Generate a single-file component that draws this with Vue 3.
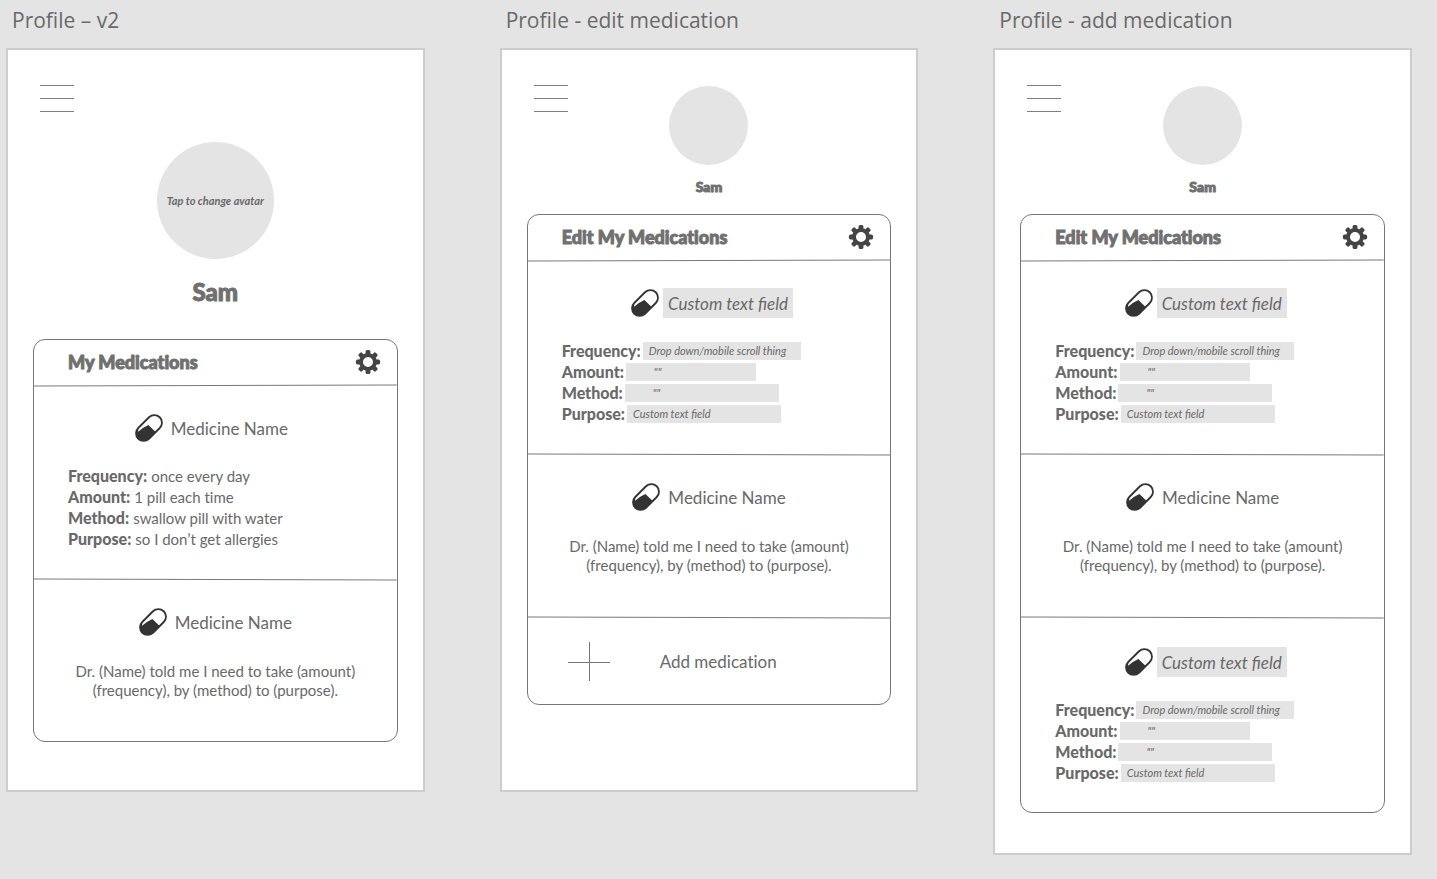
<script setup>
const editFields = [
  { kind: 'select', label: 'Frequency:', text: 'Drop down/mobile scroll thing', size: 'frequency' },
  { kind: 'select', label: 'Amount:', text: '""', size: 'amount' },
  { kind: 'select', label: 'Method:', text: '""', size: 'method' },
  { kind: 'input', label: 'Purpose:', text: 'Custom text field', size: 'purpose' },
]

const details = [
  { label: 'Frequency:', text: 'once every day' },
  { label: 'Amount:', text: '1 pill each time' },
  { label: 'Method:', text: 'swallow pill with water' },
  { label: 'Purpose:', text: 'so I don’t get allergies' },
]

const boards = [
  {
    id: 'view',
    title: 'Profile – v2',
    large: true,
    heading: 'My Medications',
    sections: [{ type: 'details' }, { type: 'sentence' }],
  },
  {
    id: 'edit',
    title: 'Profile - edit medication',
    large: false,
    heading: 'Edit My Medications',
    sections: [{ type: 'form' }, { type: 'sentence' }, { type: 'add' }],
  },
  {
    id: 'add',
    title: 'Profile - add medication',
    large: false,
    heading: 'Edit My Medications',
    sections: [{ type: 'form' }, { type: 'sentence' }, { type: 'form' }],
  },
]

const teeth = [0, 45, 90, 135, 180, 225, 270, 315]
</script>

<template>
  <main class="canvas">
    <section v-for="board in boards" :key="board.id" class="artboard">
      <h2 class="artboard-title">{{ board.title }}</h2>
      <div class="screen" :class="{ large: board.large }">
        <button class="menu" type="button" aria-label="Menu">
          <span></span><span></span><span></span>
        </button>
        <div class="person">
          <button class="avatar" type="button" aria-label="Change avatar">
            <template v-if="board.large">Tap to change avatar</template>
          </button>
          <h1 class="name">Sam</h1>
        </div>

        <div class="card">
          <header class="card-header">
            <h3>{{ board.heading }}</h3>
            <button class="settings" type="button" aria-label="Settings">
              <svg viewBox="-13 -13 26 26" width="26" height="26">
                <circle r="7" fill="none" stroke="#444" stroke-width="4" />
                <rect
                  v-for="angle in teeth"
                  :key="angle"
                  x="-2.4"
                  y="-12.1"
                  width="4.8"
                  height="5"
                  rx="1.6"
                  fill="#444"
                  :transform="`rotate(${angle})`"
                />
              </svg>
            </button>
          </header>

          <template v-for="(section, i) in board.sections" :key="i">
            <svg class="divider" viewBox="0 0 364 3" preserveAspectRatio="none" aria-hidden="true">
              <line v-if="i === 0" x1="0" y1="2" x2="364" y2="1" />
              <line v-else x1="0" y1="1" x2="364" y2="2" />
            </svg>

            <button v-if="section.type === 'add'" class="add" type="button">
              <svg viewBox="0 0 42 40" width="42" height="40" aria-hidden="true">
                <path d="M0 20.5H42M21.5 0V39" />
              </svg>
              <span>Add medication</span>
            </button>

            <div v-else class="medicine" :class="section.type">
              <div class="medicine-name">
                <svg class="pill" viewBox="0 0 28 28" width="28" height="28" aria-hidden="true">
                  <g transform="rotate(45 14 14)">
                    <rect x="6.4" y="-1.2" width="15.2" height="30.4" rx="7.6" fill="#fff" />
                    <path d="M11.4 12.2H21.6V21.6A7.6 7.6 0 0 1 6.4 21.6L9 24.4Q9 18 11.4 12.2Z" fill="#333" />
                    <rect x="6.4" y="-1.2" width="15.2" height="30.4" rx="7.6" fill="none" stroke="#333" stroke-width="1.8" />
                  </g>
                </svg>
                <input
                  v-if="section.type === 'form'"
                  class="name-field"
                  type="text"
                  value="Custom text field"
                  aria-label="Medicine name"
                />
                <span v-else>Medicine Name</span>
              </div>

              <dl v-if="section.type === 'details'" class="detail-list">
                <div v-for="row in details" :key="row.label">
                  <dt>{{ row.label }}</dt>
                  <dd>{{ row.text }}</dd>
                </div>
              </dl>

              <div v-else-if="section.type === 'form'" class="fields">
                <div v-for="field in editFields" :key="field.label" class="field">
                  <label :for="`${board.id}-${i}-${field.size}`">{{ field.label }}</label>
                  <select
                    v-if="field.kind === 'select'"
                    :id="`${board.id}-${i}-${field.size}`"
                    :class="field.size"
                  >
                    <option>{{ field.text }}</option>
                  </select>
                  <input
                    v-else
                    :id="`${board.id}-${i}-${field.size}`"
                    :class="field.size"
                    type="text"
                    :value="field.text"
                  />
                </div>
              </div>

              <p v-else class="text">
                Dr. (Name) told me I need to take (amount)<br />(frequency), by (method) to (purpose).
              </p>
            </div>
          </template>
        </div>
      </div>
    </section>
  </main>
</template>

<style>
body {
  background: #e4e4e4;
}
</style>

<style scoped>
.canvas {
  box-sizing: border-box;
  min-height: 100vh;
  display: grid;
  grid-template-columns: repeat(3, minmax(0, 1fr));
  align-items: start;
  gap: 75px;
  padding: 0 25px 24px 6px;
  background: #e4e4e4;
  color: #696969;
  font-family: Lato, "Liberation Sans", sans-serif;
  font-size: 15px;
  font-variant-ligatures: none;
}

h1,
h2,
h3,
p,
dl,
dd {
  margin: 0;
}

button {
  padding: 0;
  border: 0;
  background: none;
  color: inherit;
  font: inherit;
  cursor: pointer;
}

svg {
  display: block;
}

.artboard-title {
  height: 40px;
  margin-bottom: 8px;
  padding-left: 6px;
  color: #6a6a6a;
  font: 400 21px/40px "Open Sans", "Noto Sans", sans-serif;
  white-space: nowrap;
}

.screen {
  position: relative;
  box-sizing: border-box;
  min-height: 744px;
  padding: 36px 25px 40px;
  border: 2px solid #cdcdcd;
  background: #fff;
}

.menu {
  position: absolute;
  top: 35px;
  left: 32px;
  display: flex;
  flex-direction: column;
  gap: 12px;
  width: 34px;
}

.menu span {
  height: 1px;
  background: #808080;
}

.person {
  display: flex;
  flex-direction: column;
  align-items: center;
}

.avatar {
  width: 79px;
  height: 79px;
  border-radius: 50%;
  background: #e4e4e4;
  font-size: 11px;
  font-style: italic;
  font-weight: 700;
  white-space: nowrap;
}

.name {
  margin: 13px 0 19px;
  font-size: 14px;
  line-height: 17px;
}

.name,
.card-header h3,
.detail-list dt,
.field label {
  font-weight: 900;
}

.name,
.card-header h3 {
  color: #707070;
  -webkit-text-stroke: 1px #707070;
}

.large .person {
  padding-top: 56px;
}

.large .avatar {
  width: 117px;
  height: 117px;
}

.large .name {
  margin: 19px 0 33px;
  font-size: 24px;
  line-height: 28px;
}

.card {
  border: 1px solid #777;
  border-radius: 12px;
}

.card-header {
  display: flex;
  align-items: center;
  justify-content: space-between;
  height: 44px;
  padding: 0 16px 0 34px;
}

.card-header h3 {
  font-size: 18px;
}

.divider {
  width: 100%;
  height: 3px;
}

.divider line {
  stroke: #777;
  stroke-width: 1;
}

.medicine-name {
  display: flex;
  align-items: center;
  justify-content: center;
  gap: 8px;
  height: 30px;
  font-size: 17px;
}

.pill {
  flex: none;
  overflow: visible;
}

.details {
  padding: 26px 34px 29px;
}

.details .medicine-name {
  padding-right: 8px;
}

.detail-list {
  margin-top: 22px;
  line-height: 21px;
}

.detail-list div {
  display: flex;
  align-items: baseline;
  gap: 4px;
  height: 21px;
}

.detail-list dt,
.field label {
  font-size: 16px;
}

.sentence {
  padding: 26px 0 41px;
}

.text {
  margin-top: 25px;
  line-height: 19px;
  text-align: center;
}

.form {
  padding: 26px 34px 29px;
}

.sentence + .divider + .form {
  padding-top: 28px;
}

.form .medicine-name {
  gap: 4px;
  padding-left: 6px;
}

input,
select {
  box-sizing: border-box;
  height: 18px;
  margin: 0;
  padding: 0 6px;
  border: 0;
  border-radius: 0;
  background: #e4e4e4;
  color: inherit;
  font-family: inherit;
  font-size: 11px;
  font-style: italic;
  font-variant-ligatures: normal;
  appearance: none;
}

.name-field {
  width: 130px;
  height: 30px;
  padding: 0 5px;
  font-size: 17px;
}

.fields {
  margin-top: 22px;
}

.field {
  display: flex;
  align-items: center;
  gap: 2px;
  height: 21px;
}

.frequency {
  width: 158px;
}

.amount {
  width: 130px;
  padding-left: 28px;
}

.method {
  width: 154px;
  padding-left: 28px;
}

.purpose {
  width: 154px;
}

.add {
  display: flex;
  align-items: center;
  gap: 50px;
  width: 100%;
  height: 85px;
  padding-left: 40px;
  font-size: 17px;
}

.add path {
  stroke: #777;
  stroke-width: 1;
}
</style>
